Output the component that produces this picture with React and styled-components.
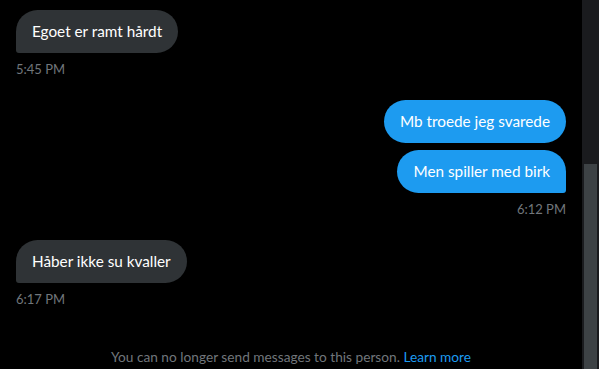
import React from 'react';
import styled, {createGlobalStyle} from "styled-components";

const GlobalStyle = createGlobalStyle`
  html, body {
    margin: 0;
    padding: 0;
    background: #000;
    overflow: hidden;
  }
  body {
    font-family: Lato, "Noto Sans", sans-serif;
  }
`;

const messages = [
    {id: 1, side: 'left', texts: ['Egoet er ramt hårdt'], time: '5:45 PM'},
    {id: 2, side: 'right', texts: ['Mb troede jeg svarede', 'Men spiller med birk'], time: '6:12 PM'},
    {id: 3, side: 'left', texts: ['Håber ikke su kvaller'], time: '6:17 PM'},
];

const App = () => {
    return (
        <>
            <GlobalStyle/>
            <Screen>
                <Conversation>
                    <Thread>
                        {
                            messages.map((group) => (
                                <Group key={group.id} side={group.side}>
                                    {
                                        group.texts.map((text, i) => (
                                            <Bubble
                                                key={i}
                                                side={group.side}
                                                last={i === group.texts.length - 1}
                                            >
                                                {text}
                                            </Bubble>
                                        ))
                                    }
                                    <Time>{group.time}</Time>
                                </Group>
                            ))
                        }
                    </Thread>
                    <Notice>
                        You can no longer send messages to this person. <a href="#">Learn more</a>
                    </Notice>
                </Conversation>
                <Scrollbar>
                    <Thumb/>
                </Scrollbar>
            </Screen>
        </>
    );
};

// Styles
const Screen = styled.div`
  display: flex;
  width: 599px;
  height: 369px;
  background: #000;
`;

const Conversation = styled.div`
  flex: 1;
  display: flex;
  flex-direction: column;
  justify-content: space-between;
  padding: 10px 16px 4px;
`;

const Thread = styled.div`
  display: flex;
  flex-direction: column;
  gap: 23px;
`;

const Group = styled.div`
  display: flex;
  flex-direction: column;
  align-items: ${props => props.side === 'right' ? 'flex-end' : 'flex-start'};
  gap: 7px;
`;

const Bubble = styled.div`
  padding: 12px 16px;
  font-size: 15.3px;
  line-height: 19px;
  color: #fff;
  border-radius: 22px;
  background: ${props => props.side === 'right' ? '#1d9bf0' : '#2f3336'};
  ${props => props.last && (props.side === 'right'
    ? 'border-bottom-right-radius: 3px;'
    : 'border-bottom-left-radius: 3px;')}
`;

const Time = styled.div`
  margin-top: 1px;
  font-size: 13px;
  line-height: 16px;
  color: #71767b;
`;

const Notice = styled.div`
  text-align: center;
  font-size: 13.7px;
  line-height: 16px;
  color: #71767b;

  a {
    color: #1d9bf0;
    text-decoration: none;
  }
`;

const Scrollbar = styled.div`
  width: 17px;
  background: #1a1b1e;
  display: flex;
  flex-direction: column;
  justify-content: flex-end;
  align-items: center;
`;

const Thumb = styled.div`
  width: 13px;
  height: 205px;
  background: #3d4245;
`;

export default App;
